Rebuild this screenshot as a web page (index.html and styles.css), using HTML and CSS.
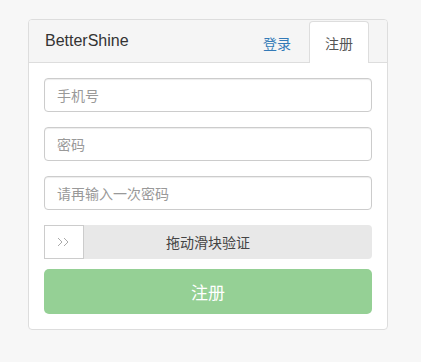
FILE: index.html
```html
<!DOCTYPE html>
<html lang="zh">
<head>
<meta charset="utf-8">
<title>BetterShine</title>
<link rel="stylesheet" href="styles.css">
</head>
<body>
<div class="card">
  <div class="card-header">
    <div class="brand">BetterShine</div>
    <ul class="tabs">
      <li class="tab">登录</li>
      <li class="tab active">注册</li>
    </ul>
  </div>
  <div class="card-body">
    <input class="field" type="text" placeholder="手机号">
    <input class="field" type="password" placeholder="密码">
    <input class="field" type="password" placeholder="请再输入一次密码">
    <div class="slider">
      <div class="handle">
        <svg width="14" height="10" viewBox="0 0 14 10"><path d="M1 1 L5 5 L1 9 M7 1 L11 5 L7 9" fill="none" stroke="#aaa" stroke-width="1"/></svg>
      </div>
      <span class="slider-text">拖动滑块验证</span>
    </div>
    <button class="submit">注册</button>
  </div>
</div>
</body>
</html>
```

FILE: styles.css
```css
* { box-sizing: border-box; }
html, body { margin: 0; padding: 0; }
body {
  background: #f7f7f7;
  font-family: "Liberation Sans", "Noto Sans CJK SC", sans-serif;
  font-size: 14px;
  color: #333;
  padding: 19px 0 0 28px;
}
.card {
  width: 360px;
  background: #fff;
  border: 1px solid #ddd;
  border-radius: 4px;
}
.card-header {
  display: flex;
  align-items: flex-end;
  justify-content: space-between;
  height: 43px;
  background: #f5f5f5;
  border-bottom: 1px solid #ddd;
  border-radius: 3px 3px 0 0;
  padding: 0 18px 0 16px;
}
.brand {
  align-self: center;
  font-size: 16px;
  color: #333;
  margin-top: -1px;
}
.tabs {
  display: flex;
  gap: 2px;
  margin: 0 0 -1px 0;
  padding: 0;
  list-style: none;
}
.tab {
  height: 42px;
  padding: 1px 15px 0;
  display: flex;
  align-items: center;
  border: 1px solid transparent;
  border-bottom: none;
  border-radius: 4px 4px 0 0;
  color: #337ab7;
  font-family: "Noto Sans CJK SC", sans-serif;
  font-size: 14px;
}
.tab.active {
  background: #fff;
  border-color: #ddd;
  color: #555;
}
.card-body {
  padding: 15px;
  display: flex;
  flex-direction: column;
}
.field {
  height: 34px;
  margin: 0 0 15px 0;
  padding: 6px 12px;
  border: 1px solid #ccc;
  border-radius: 4px;
  font-family: "Noto Sans CJK SC", sans-serif;
  font-size: 14px;
  color: #555;
  background: #fff;
  box-shadow: inset 0 1px 1px rgba(0,0,0,0.075);
  outline: none;
}
.field::placeholder { color: #999; }
.slider {
  position: relative;
  height: 34px;
  background: #e8e8e8;
  border-radius: 4px;
  display: flex;
  align-items: center;
  justify-content: center;
  margin-bottom: 10px;
}
.handle {
  position: absolute;
  left: 0;
  top: 0;
  width: 40px;
  height: 34px;
  background: #fff;
  border: 1px solid #ccc;
  display: flex;
  align-items: center;
  justify-content: center;
}
.slider-text {
  font-family: "Noto Sans CJK SC", sans-serif;
  font-size: 14px;
  color: #444;
}
.submit {
  height: 45px;
  border: none;
  border-radius: 5px;
  background: #95d095;
  color: #fff;
  font-family: "Noto Sans CJK SC", sans-serif;
  font-size: 17px;
  cursor: pointer;
}
```
